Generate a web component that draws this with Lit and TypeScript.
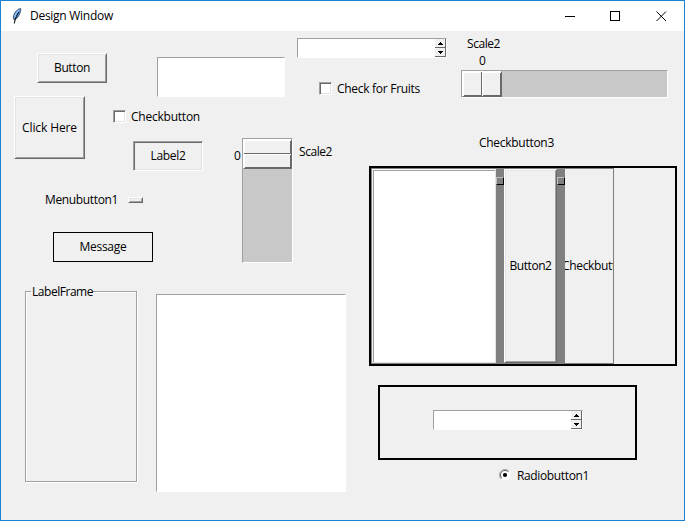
import { LitElement, html, css } from "lit";
import { customElement, property } from "lit/decorators.js";
import { styleMap } from "lit/directives/style-map.js";

const FRAME = 1;
const TITLE_BAR = 31;

/** Places a widget on the form, in window coordinates. */
const at = (x: number, y: number, w: number, h: number) =>
  styleMap({
    left: `${x - FRAME}px`,
    top: `${y - TITLE_BAR}px`,
    width: `${w}px`,
    height: `${h}px`,
  });

/** A caption whose tracking is tuned so that it takes exactly `w` pixels. */
@customElement("tk-text")
class TkText extends LitElement {
  @property() text = "";
  @property({ type: Number }) w = 0;

  static styles = css`
    :host { display: inline-block; height: 16px; line-height: 16px; white-space: pre; }
    .run { display: inline-block; }
  `;

  updated() {
    const run = this.renderRoot.querySelector(".run") as HTMLElement;
    run.style.letterSpacing = "0px";
    const natural = run.getBoundingClientRect().width;
    if (this.w && this.text.length > 1) {
      run.style.letterSpacing = `${(this.w - natural) / this.text.length}px`;
    }
  }

  render() {
    return html`<span class="run">${this.text}</span>`;
  }
}

@customElement("tk-spinbox")
class TkSpinbox extends LitElement {
  static styles = css`
    :host {
      display: flex; box-sizing: border-box; background: #fff;
      border: 1px solid; border-color: #a0a0a0 #fff #fff #a0a0a0;
    }
    .field { flex: 1; }
    .steps { width: 11px; display: flex; flex-direction: column; }
    .step {
      flex: 1; display: grid; place-items: center; background: #f0f0f0;
      border-right: 1px solid #696969; border-bottom: 1px solid #696969;
    }
    svg { display: block; }
  `;

  render() {
    const arrow = (d: string) => html`
      <div class="step"><svg width="5" height="3" shape-rendering="crispEdges"><path d=${d} /></svg></div>`;
    return html`
      <div class="field"></div>
      <div class="steps">
        ${arrow("M2 0h1v1h1v1h1v1H0V2h1V1h1z")}
        ${arrow("M0 0h5v1H4v1H3v1H2V2H1V1H0z")}
      </div>`;
  }
}

@customElement("app-root")
class AppRoot extends LitElement {
  static styles = css`
    :host {
      display: flex; flex-direction: column; box-sizing: border-box;
      width: 685px; height: 521px; overflow: hidden;
      border: 1px solid #1883d7; background: #f0f0f0; color: #000;
      font: 12px/16px "Open Sans", "Noto Sans", sans-serif;
    }
    .title-bar { display: flex; align-items: center; height: 30px; background: #fff; flex: none; }
    .logo { margin: 0 8px 0 11px; display: block; }
    .caption { flex: 1; }
    .control { width: 45.5px; display: grid; place-items: center; }
    .control svg, .radio svg { display: block; }
    .form { position: relative; flex: 1; }
    .w { position: absolute; box-sizing: border-box; }
    .center { display: flex; align-items: center; justify-content: center; }
    .row { display: flex; align-items: center; gap: 5px; }
    .row tk-text { margin-top: 1px; }
    .raised {
      border: 1px solid; border-color: #fff #696969 #696969 #fff;
      box-shadow: inset 1px 1px #e3e3e3, inset -1px -1px #a0a0a0;
    }
    .sunken {
      border: 1px solid; border-color: #a0a0a0 #fff #fff #a0a0a0;
      box-shadow: inset 1px 1px #696969, inset -1px -1px #e3e3e3;
    }
    .entry { background: #fff; border: 1px solid; border-color: #a0a0a0 #fff #fff #a0a0a0; }
    .box { width: 13px; height: 13px; box-sizing: border-box; background: #fff; flex: none; }
    .trough {
      display: flex; background: #c8c8c8;
      border: 1px solid; border-color: #a0a0a0 #fff #fff #a0a0a0;
    }
    .trough.down { flex-direction: column; }
    .slider {
      box-sizing: border-box; display: flex; background: #f0f0f0;
      border: 1px solid; border-color: #fff #696969 #696969 #fff;
      box-shadow: inset 1px 1px #fff, inset -1px -1px #696969;
    }
    .across .slider { width: 40px; }
    .down .slider { height: 30px; flex-direction: column; }
    .half { flex: 1; }
    .across .half:first-child { border-right: 1px solid #696969; }
    .across .half:last-child { border-left: 1px solid #fff; }
    .down .half:first-child { border-bottom: 1px solid #696969; }
    .down .half:last-child { border-top: 1px solid #fff; }
    .knob { width: 15px; height: 6px; box-sizing: border-box; }
    .message { border: 1px solid #000; }
    .frame { border: 2px solid #000; }
    .group { border: 1px solid #a0a0a0; box-shadow: inset 1px 1px #fff, 1px 1px #fff; }
    .legend { background: #f0f0f0; padding-left: 1px; }
    .panes { display: flex; width: 243px; height: 196px; box-sizing: border-box; background: #808080; padding: 1px; }
    .pane-text {
      width: 124px; box-sizing: border-box; background: #fff;
      border: 1px solid; border-color: #fff #e3e3e3 #e3e3e3 #f0f0f0;
      box-shadow: inset 1px 1px #a0a0a0;
    }
    .sash { width: 8px; padding-top: 8px; }
    .handle {
      height: 8px; box-sizing: border-box; background: #808080;
      border: 1px solid; border-color: #c0c0c0 #000 #000 #c0c0c0;
    }
    .pane-button { width: 53px; box-sizing: border-box; background: #f0f0f0; }
    .pane-check { width: 48px; background: #f0f0f0; overflow: hidden; display: flex; align-items: center; }
    .pane-check tk-text { margin-left: -3px; }
  `;

  private text(text: string, w: number) {
    return html`<tk-text .text=${text} .w=${w}></tk-text>`;
  }

  /** A bare caption; y is its baseline. */
  private label(text: string, x: number, y: number, w: number, cls = "") {
    return html`<div class="w ${cls}" style=${at(x, y - 12, w, 16)}>${this.text(text, w)}</div>`;
  }

  private check(text: string, x: number, y: number, w: number) {
    return html`
      <div class="w row" style=${at(x, y, w + 18, 13)}>
        <span class="box sunken"></span>${this.text(text, w)}
      </div>`;
  }

  private scale(dir: string, x: number, y: number, w: number, h: number) {
    return html`
      <div class="w trough ${dir}" style=${at(x, y, w, h)}>
        <div class="slider"><span class="half"></span><span class="half"></span></div>
      </div>`;
  }

  private titleBar() {
    return html`
      <header class="title-bar">
        <svg class="logo" width="10" height="16" viewBox="0 0 10 16">
          <path d="M8.600 .5C6 .7 2.600 4 1.700 7.500c-.5 2.100-.2 3.500.5 4.500 2.600-1 5-4 6-7.500.5-1.800.7-3.300.4-4z" fill="#5b9be6" stroke="#1c2430" stroke-width=".7" />
          <path d="M6.800 4C5 7 3.300 10 2.300 15.500" fill="none" stroke="#000" stroke-width="1" />
          <path d="M6.800 2.200C4.600 4.300 3.300 6.500 2.800 8.800" fill="none" stroke="#b9dcf8" stroke-width=".9" />
        </svg>
        <span class="caption">${this.text("Design Window", 83)}</span>
        <span class="control"><svg width="11" height="11" shape-rendering="crispEdges"><path d="M0 5h10v1H0z" /></svg></span>
        <span class="control"><svg width="11" height="11" shape-rendering="crispEdges"><path d="M.5 .5h9v9h-9z" fill="none" stroke="#000" /></svg></span>
        <span class="control"><svg width="11" height="11"><path d="M.5 .5l9.500 9.500M10 .5l-9.500 9.500" stroke="#000" stroke-width="1" /></svg></span>
      </header>`;
  }

  render() {
    return html`
      ${this.titleBar()}
      <main class="form">
        <div class="w raised center" style=${at(37, 53, 70, 30)}>${this.text("Button", 36)}</div>
        <div class="w raised center" style=${at(14, 96, 71, 63)}>${this.text("Click Here", 55)}</div>
        <div class="w entry" style=${at(157, 57, 128, 40)}></div>
        ${this.check("Checkbutton", 113, 110, 69)}
        <div class="w sunken center" style=${at(133, 141, 70, 30)}>${this.text("Label2", 35)}</div>

        <tk-spinbox class="w" style=${at(297, 38, 150, 20)}></tk-spinbox>
        ${this.check("Check for Fruits", 319, 82, 83)}

        ${this.label("Scale2", 467, 48, 33)}
        ${this.label("0", 479, 65, 7)}
        ${this.scale("across", 461, 70, 207, 28)}

        ${this.label("0", 234, 160, 7)}
        ${this.scale("down", 242, 138, 51, 125)}
        ${this.label("Scale2", 299, 156, 33)}

        ${this.label("Menubutton1", 45, 204, 73)}
        <div class="w raised knob" style=${at(128, 197, 15, 6)}></div>
        <div class="w message center" style=${at(53, 232, 100, 30)}>${this.text("Message", 47)}</div>

        <div class="w group" style=${at(25, 291, 112, 191)}></div>
        ${this.label("LabelFrame", 31, 296, 61, "legend")}
        <div class="w entry" style=${at(156, 294, 190, 198)}></div>

        ${this.label("Checkbutton3", 479, 147, 75)}
        <div class="w frame" style=${at(369, 166, 308, 200)}>
          <div class="panes">
            <div class="pane-text"></div>
            <div class="sash"><div class="handle"></div></div>
            <div class="pane-button raised center">${this.text("Button2", 42)}</div>
            <div class="sash"><div class="handle"></div></div>
            <div class="pane-check">${this.text("Checkbutt", 54)}</div>
          </div>
        </div>

        <div class="w frame" style=${at(378, 385, 259, 75)}></div>
        <tk-spinbox class="w" style=${at(433, 410, 150, 20)}></tk-spinbox>
        <div class="w row radio" style=${at(499, 469, 92, 13)}>
          <svg width="13" height="13" viewBox="0 0 13 13">
            <circle cx="6" cy="6" r="5.500" fill="#fff" />
            <path d="M2.100 9.900A5.500 5.500 0 0 1 9.900 2.100" fill="none" stroke="#a0a0a0" />
            <path d="M2.800 9.200A4.500 4.500 0 0 1 9.200 2.800" fill="none" stroke="#696969" />
            <circle cx="6" cy="6" r="2.100" />
          </svg>
          ${this.text("Radiobutton1", 72)}
        </div>
      </main>`;
  }
}
